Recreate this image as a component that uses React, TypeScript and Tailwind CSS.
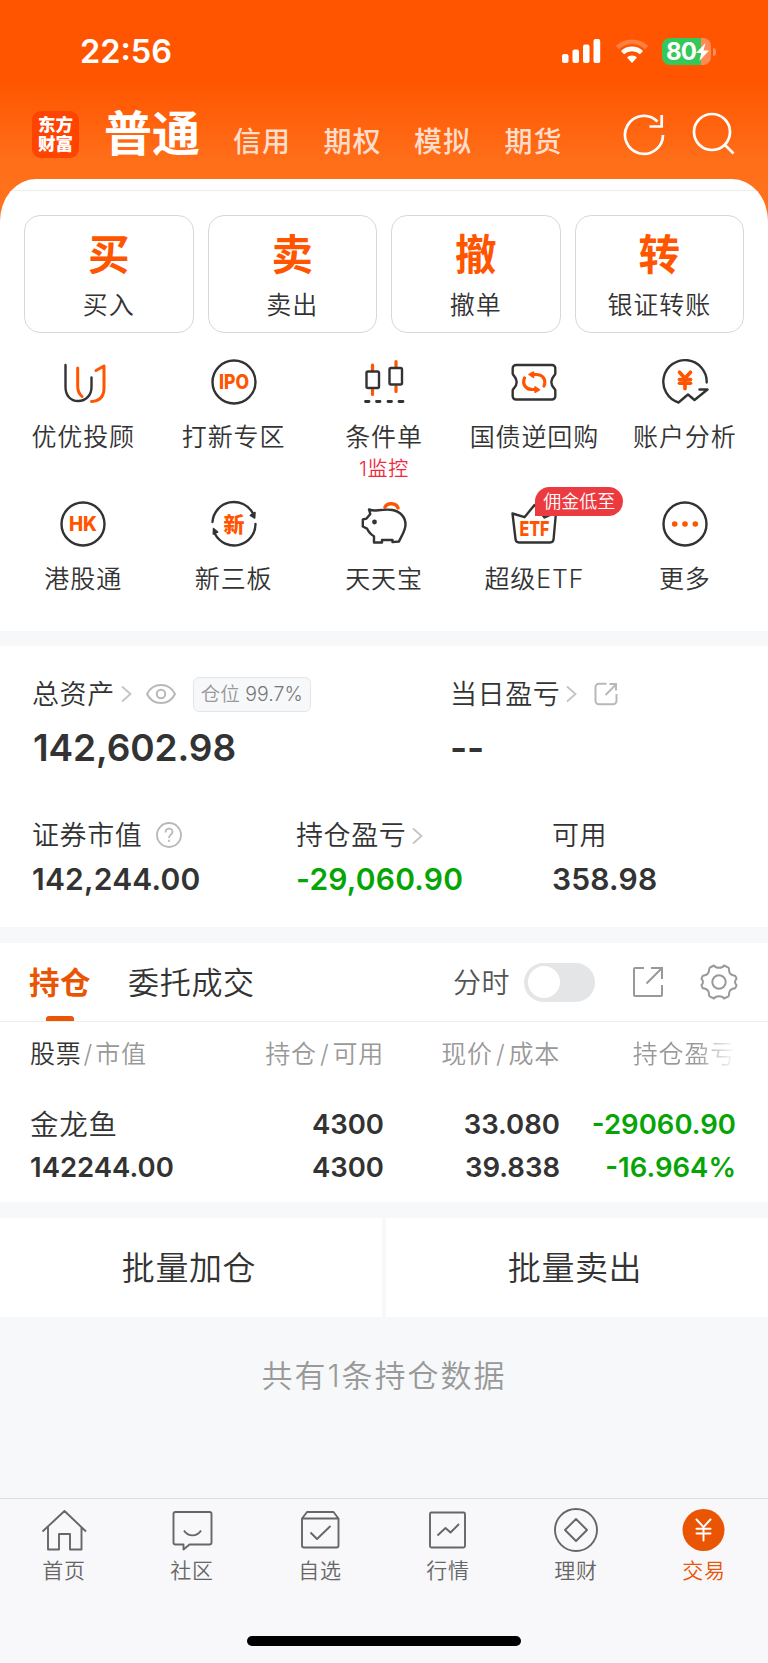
import type { ReactNode } from "react"
import { JapaneseYen } from "lucide-react"

const DARK = "#333333"
const ORANGE = "#ff5500"

const headerTabs = ["信用", "期权", "模拟", "期货"]

const actions = [
    { id: 1, mark: "买", name: "买入" },
    { id: 2, mark: "卖", name: "卖出" },
    { id: 3, mark: "撤", name: "撤单" },
    { id: 4, mark: "转", name: "银证转账" },
]

const Svg = ({ children, size = 48 }: { children: ReactNode; size?: number }) => (
    <svg width={size} height={size} viewBox={`0 0 ${size} ${size}`} fill="none" stroke={DARK} strokeWidth="2.4" strokeLinecap="round" strokeLinejoin="round">
        {children}
    </svg>
)

const AdvisorIcon = () => (
    <Svg>
        <path d="M6.500 7v22c0 8.500 5 14 12.700 14s13.300-5.500 13.300-14v-9.500" />
        <g stroke={ORANGE} strokeWidth="3">
            <path d="M18.700 10v18.500c0 4.500 1.500 7.500 4.300 10" />
            <path d="M37 12.500l8-4.500v22c0 8-4 13-12.500 13.500" />
        </g>
    </Svg>
)

const IpoIcon = () => (
    <Svg>
        <circle cx="24" cy="24" r="21.500" />
        <text x="24" y="31" fontSize="20" fontWeight="800" textAnchor="middle" textLength="30" lengthAdjust="spacingAndGlyphs" fill={ORANGE} stroke="none">IPO</text>
    </Svg>
)

const ConditionIcon = () => (
    <Svg>
        <g stroke={ORANGE} strokeWidth="3.200">
            <path d="M12.500 7v6M12.500 32v4.500M36 3.500v6M36 28.500v5" />
        </g>
        <rect x="6.500" y="13.500" width="12.500" height="16.500" rx="1.500" />
        <rect x="29.500" y="10" width="12.500" height="16.500" rx="1.500" />
        <path d="M5.500 43.500h3.500M16.500 43.500h3.500M28 43.500h3.500M39 43.500h4" strokeWidth="2.800" />
    </Svg>
)

const BondIcon = () => (
    <Svg>
        <path d="M6 7h36a3.300 3.300 0 0 1 3.300 3.300v5.400c0 1.500-4 3.500-4 8.300s4 6.800 4 8.300v5.900a3.300 3.300 0 0 1-3.300 3.300H6a3.300 3.300 0 0 1-3.300-3.300v-5.900c0-1.500 4-3.500 4-8.300s-4-6.800-4-8.300v-5.400A3.300 3.300 0 0 1 6 7z" />
        <g stroke={ORANGE} strokeWidth="3.200">
            <path d="M14.500 20c-2.500 6 1 11.500 8 11.500h3.500M34 28c2.500-6-1-11.500-8-11.500h-3.500" />
            <path d="M23.500 14v5.500l-4.500-3zM25 28.800v5.500l4.500-2.500z" fill={ORANGE} strokeWidth="1.500" />
        </g>
    </Svg>
)

const AnalysisIcon = () => (
    <Svg>
        <path d="M45.700 24.500A21.700 21.700 0 1 0 17.500 44.500l9.500-8 6.500 5.500L46.500 31.500h-8" />
        <JapaneseYen x={13} y={11.500} width={22} height={22} color={ORANGE} strokeWidth={4} />
    </Svg>
)

const HkIcon = () => (
    <Svg>
        <circle cx="24" cy="24" r="21.500" />
        <text x="24" y="31" fontSize="20" fontWeight="800" textAnchor="middle" textLength="28" lengthAdjust="spacingAndGlyphs" fill={ORANGE} stroke="none">HK</text>
    </Svg>
)

const NewBoardIcon = () => (
    <Svg>
        <path d="M2.500 22A21.500 21.500 0 0 1 43 13.500M45.500 24A21.500 21.500 0 0 1 5 34" />
        <path d="M45 12.500l-.3 5.500-4.400-2.700zM3.500 28.500l-.2 5.500 4.400-2z" fill={DARK} strokeWidth="1.500" />
        <text x="24" y="31.500" fontSize="21" fontWeight="900" textAnchor="middle" fill={ORANGE} stroke="none">新</text>
    </Svg>
)

const PiggyIcon = () => (
    <Svg>
        <path d="M25 7c2.500-4.500 11-4.500 13 1" stroke={ORANGE} strokeWidth="3.400" />
        <path d="M9 9.500c2.500.9 5.500 1.200 9 .8 5-.6 10.500-1 14.500-.3 8 1.300 13 7.500 13 14.500 0 6-3.500 10.500-6.500 17l-6.500.6V40H22v2.500h-8v-6.200c-4-2-5.600-4.700-7-7.700L2.800 26.500v-7l3.500-.8 4-4.700z" />
        <circle cx="14.500" cy="22" r="2.400" fill={DARK} stroke="none" />
    </Svg>
)

const EtfIcon = () => (
    <Svg>
        <path d="M2.500 13.500l12 3.700L24.500 5l10 12.500 11.500-5-2.400 26.500c-.2 2.500-1 3.500-3.500 3.500H9c-2.500 0-3.300-1-3.500-3.500z" />
        <text x="24.500" y="35.500" fontSize="20.500" fontWeight="800" textAnchor="middle" textLength="30" lengthAdjust="spacingAndGlyphs" fill={ORANGE} stroke="none">ETF</text>
    </Svg>
)

const MoreIcon = () => (
    <Svg>
        <circle cx="24" cy="24" r="21.500" />
        <g fill={ORANGE} stroke="none">
            <circle cx="13.700" cy="24" r="2.800" />
            <circle cx="24" cy="24" r="2.800" />
            <circle cx="34.300" cy="24" r="2.800" />
        </g>
    </Svg>
)

const services = [
    { id: 1, name: "优优投顾", icon: <AdvisorIcon /> },
    { id: 2, name: "打新专区", icon: <IpoIcon /> },
    { id: 3, name: "条件单", icon: <ConditionIcon />, note: "1监控" },
    { id: 4, name: "国债逆回购", icon: <BondIcon /> },
    { id: 5, name: "账户分析", icon: <AnalysisIcon /> },
    { id: 6, name: "港股通", icon: <HkIcon /> },
    { id: 7, name: "新三板", icon: <NewBoardIcon /> },
    { id: 8, name: "天天宝", icon: <PiggyIcon /> },
    { id: 9, name: "超级ETF", icon: <EtfIcon />, badge: "佣金低至" },
    { id: 10, name: "更多", icon: <MoreIcon /> },
]

const navItems = [
    {
        name: "首页",
        icon: <path d="M2.500 24.500L24.500 4l21.500 20.500M8 20v22.500h11V27h11v15.500h11.500V20" />,
    },
    {
        name: "社区",
        icon: (
            <>
                <path d="M7.500 5h34a2 2 0 0 1 2 2v28.500a2 2 0 0 1-2 2H21.500l-6 5v-5h-8a2 2 0 0 1-2-2V7a2 2 0 0 1 2-2z" />
                <path d="M16 23.500c4 6.500 13 6.500 17 0" />
            </>
        ),
    },
    {
        name: "自选",
        icon: (
            <>
                <path d="M6 11.500L11 5h26.500l5 6.500V38.500a2 2 0 0 1-2 2H8a2 2 0 0 1-2-2zM6 11.500h36.500" />
                <path d="M14.500 25.500l6.500 6.500L34.500 19" />
            </>
        ),
    },
    {
        name: "行情",
        icon: (
            <>
                <rect x="6" y="5.500" width="35" height="35" rx="1.500" />
                <path d="M13.500 28.500l8-7.500 5 4.500 8.500-8.500" />
            </>
        ),
    },
    {
        name: "理财",
        icon: (
            <>
                <circle cx="24" cy="23" r="21" />
                <path d="M24 12l11 11-11 11-11-11z" />
            </>
        ),
    },
    {
        name: "交易",
        active: true,
        icon: (
            <>
                <circle cx="23.500" cy="23" r="21" fill="#ea5504" stroke="none" />
                <JapaneseYen x={9.500} y={9} width={28} height={28} color="#ffffff" strokeWidth={1.700} />
            </>
        ),
    },
]

const Chevron = () => (
    <svg width="12" height="18" viewBox="0 0 12 18" fill="none" stroke="#c4c4c4" strokeWidth="1.800">
        <path d="M1 1.500L9.500 9 1 16.500" />
    </svg>
)

const Header = () => (
    <header className="h-[240px] bg-[linear-gradient(180deg,#ff5500_0px,#ff5500_80px,#ff6e19_160px,#ff741f_240px)] text-white">
        <div className="flex h-[103px] items-center pl-20 pr-[52px]">
            <span className="text-[32.500px] leading-10 font-semibold">22:56</span>
            <div className="ml-auto flex items-center">
                <svg width="39" height="25" viewBox="0 0 39 25" fill="#fff">
                    <rect x="0" y="15" width="6.500" height="9" rx="2" />
                    <rect x="10.500" y="10.500" width="6.500" height="13.500" rx="2" />
                    <rect x="21" y="5.500" width="6.500" height="18.500" rx="2" />
                    <rect x="31.500" y="0" width="6.700" height="24" rx="2" />
                </svg>
                <svg className="ml-[14px]" width="34" height="25" viewBox="0 0 34 25" fill="none" stroke="#fff" strokeWidth="4.600">
                    <path d="M2.300 8.500a21.500 21.500 0 0 1 29.400 0" strokeOpacity=".25" />
                    <path d="M7.500 13.600a14 14 0 0 1 19 0" />
                    <path d="M17 16.500c2 0 3.800.8 5 1.900L17 24l-5-5.600c1.200-1.100 3-1.900 5-1.900z" fill="#fff" stroke="none" />
                </svg>
                <div className="ml-[13px] flex h-[27px] w-[49px] items-center rounded-lg bg-[linear-gradient(90deg,#34c759_0_80%,#ff8a55_80%)] pl-1">
                    <span className="text-[24px] leading-none font-bold tracking-[-0.800px]">80</span>
                    <svg width="13" height="18" viewBox="0 0 13 18" fill="#fff">
                        <path d="M9.500 0L0 10h5.300L3.300 18 13 7.500H7.500z" />
                    </svg>
                </div>
                <div className="ml-0.5 h-2 w-[3px] rounded-r-full bg-[#ff8a55]" />
            </div>
        </div>
        <div className="flex h-[62px] items-center pl-8">
            <div className="flex size-[47px] flex-col items-center justify-center rounded-[9px] bg-[#ff4300] text-[17.500px] leading-[19.500px] font-black">
                <span>东方</span>
                <span>财富</span>
            </div>
            <h1 className="ml-[25px] text-[48px] leading-[60px] font-bold">普通</h1>
            <nav className="ml-[33px] flex gap-[32.500px] pt-4 text-[28px] leading-9 font-medium tracking-[1px] text-[#ffddcc]">
                {headerTabs.map((item) => (
                    <span key={item}>{item}</span>
                ))}
            </nav>
            <svg className="ml-[59px]" width="44" height="44" viewBox="0 0 44 44" fill="none" stroke="#fff" strokeWidth="2.700">
                <path d="M41 23a19 19 0 1 1-5.500-13.500" />
                <path d="M39.700 3v11.500H27.500" />
            </svg>
            <svg className="ml-[26px]" width="44" height="44" viewBox="0 0 44 44" fill="none" stroke="#fff" strokeWidth="2.700">
                <circle cx="20" cy="20" r="18" />
                <path d="M32.500 32.500l9 9" />
            </svg>
        </div>
    </header>
)

const Services = () => (
    <section className="-mt-[61px] h-[452px] bg-white pt-[11px] [border-radius:36px_36px_0_0/42px_42px_0_0]">
        <div className="mx-3 h-px bg-[#ececec]" />
        <div className="mt-6 grid grid-cols-4 gap-[14px] px-6">
            {actions.map((item) => (
                <button key={item.id} className="flex h-[118px] flex-col items-center rounded-2xl border border-[#d8d8d8] pt-[14px]">
                    <span className="text-[41.500px] leading-[50px] font-bold text-[#ff5500]">{item.mark}</span>
                    <span className="mt-[9px] text-[25px] leading-8 tracking-[0.900px]">{item.name}</span>
                </button>
            ))}
        </div>
        <div className="mt-[25px] grid grid-cols-5 px-2">
            {services.map((item) => (
                <div key={item.id} className="relative flex h-[142px] flex-col items-center">
                    {item.icon}
                    <span className="mt-[15px] text-[25px] leading-8 tracking-[0.900px] whitespace-nowrap">{item.name}</span>
                    {item.note && <span className="text-[20px] leading-8 tracking-[0.700px] text-[#f0283c]">{item.note}</span>}
                    {item.badge && (
                        <span className="absolute -top-[13px] left-[76px] h-[29px] w-[88px] rounded-[15px] rounded-bl-none bg-[#eb3b40] text-center text-[18px] leading-[30px] text-white">
                            {item.badge}
                        </span>
                    )}
                </div>
            ))}
        </div>
    </section>
)

const Assets = () => (
    <section className="mt-[15px] h-[281px] bg-white pt-[30px] pl-8 text-[27px] tracking-[0.600px]">
        <div className="grid grid-cols-[418px_1fr]">
            <div className="flex h-9 items-center">
                <span className="pt-0.5">总资产</span>
                <span className="ml-1.5"><Chevron /></span>
                <svg className="ml-3" width="32" height="24" viewBox="0 0 32 24" fill="none" stroke="#b8b8b8" strokeWidth="2">
                    <path d="M2 12C5 6 10 3 16 3s11 3 14 9c-3 6-8 9-14 9S5 18 2 12z" />
                    <circle cx="16" cy="12" r="4.200" />
                </svg>
                <span className="ml-4 flex h-[35px] w-[118px] items-center justify-center rounded-md border border-[#e4e5e8] bg-[#f7f8fa] pt-0.5 text-[19.500px] tracking-normal whitespace-nowrap text-[#999999]">
                    仓位&nbsp;<span className="text-[#777777]">99.7%</span>
                </span>
            </div>
            <div className="flex h-9 items-center">
                <span className="pt-0.5">当日盈亏</span>
                <span className="ml-1.5"><Chevron /></span>
                <svg className="ml-4" width="24" height="24" viewBox="0 0 24 24" fill="none" stroke="#b8b8b8" strokeWidth="2">
                    <path d="M12.500 1.800H5a3.500 3.500 0 0 0-3.500 3.500v13.500a3.500 3.500 0 0 0 3.500 3.500h14a3.500 3.500 0 0 0 3.500-3.500V12M11.500 13L22 2.500M15.500 2H22v6.500" />
                </svg>
            </div>
        </div>
        <div className="mt-4 grid h-10 grid-cols-[418px_1fr] items-center text-[37px] leading-10 font-semibold tracking-[-0.100px]">
            <span className="pl-px">142,602.98</span>
            <span>--</span>
        </div>
        <div className="mt-[48px] grid h-9 grid-cols-[264px_256px_1fr] items-center">
            <div className="flex items-center">
                <span>证券市值</span>
                <svg className="ml-[13px]" width="28" height="28" viewBox="0 0 28 28" fill="none" stroke="#b8b8b8" strokeWidth="1.800">
                    <circle cx="14" cy="13" r="12" />
                    <path d="M10.500 10.500c0-5 7-5 7-.8 0 3-3.500 2.800-3.500 6.300M14 17.800v2" />
                </svg>
            </div>
            <div className="flex items-center">
                <span>持仓盈亏</span>
                <span className="ml-1.5"><Chevron /></span>
            </div>
            <span>可用</span>
        </div>
        <div className="mt-[10px] grid h-[34px] grid-cols-[264px_256px_1fr] items-center text-[30px] leading-[34px] font-semibold tracking-[0.200px]">
            <span>142,244.00</span>
            <span className="text-[#06a506]">-29,060.90</span>
            <span>358.98</span>
        </div>
    </section>
)

const Holdings = () => (
    <section className="mt-4 h-[259px] bg-white">
        <div className="flex h-[79px] items-center border-b border-[#eeeeee] pl-[29px] text-[31px]">
            <div className="flex h-[78px] flex-col items-center">
                <span className="mt-[19px] h-[54px] text-[30.500px] leading-[42px] font-bold tracking-[0.500px] text-[#ea5504]">持仓</span>
                <span className="h-[5px] w-7 rounded-t-[3px] bg-[#ea5504]" />
            </div>
            <span className="ml-[37px] pt-0.5 leading-[42px] tracking-[0.700px]">委托成交</span>
            <span className="ml-auto pt-0.5 text-[28px] tracking-[0.500px] text-[#555555]">分时</span>
            <div className="ml-[14px] flex h-[39px] w-[71px] items-center rounded-full bg-[#e4e5e7] pl-1">
                <div className="size-8 rounded-full bg-white" />
            </div>
            <svg className="ml-[37px]" width="32" height="32" viewBox="0 0 32 32" fill="none" stroke="#999999" strokeWidth="2">
                <path d="M12 2H3a1 1 0 0 0-1 1v26a1 1 0 0 0 1 1h26a1 1 0 0 0 1-1V19M14.500 17.500L29.500 2.500M19 2h11v11" />
            </svg>
            <svg className="mr-[30px] ml-[36px]" width="38" height="38" viewBox="0 0 38 38" fill="none" stroke="#999999" strokeWidth="2" strokeLinejoin="round">
                <path d="M10 4.500L14 2.500C15.500 5.500 22.500 5.500 24 2.500L28.500 4.700C29.500 5.500 28.500 8 29.800 10C31 12 33 12.500 35 12.700C36 14 36.500 15 36.500 16C34.500 17.500 34.500 20.500 36.500 22C36.500 23 36 24 35 25.300C33 25.500 31 26 29.800 28C28.500 30 29.500 32.500 28.500 33.300L24 35.500C22.500 32.500 15.500 32.500 14 35.500L9.500 33.300C8.500 32.500 9.500 30 8.200 28C7 26 5 25.500 3 25.300C2 24 1.500 23 1.500 22C3.500 20.500 3.500 17.500 1.500 16C1.500 15 2 14 3 12.700C5 12.500 7 12 8.200 10C9.500 8 8.500 5.500 10 4.500z" />
                <circle cx="19" cy="19" r="6.700" />
            </svg>
        </div>
        <div className="grid grid-cols-[178px_176px_176px_176px] pl-[30px] text-right text-[25px] leading-[64px] tracking-[0.800px] text-[#999999]">
            <span className="text-left">
                <span className="text-[#333333]">股票</span><span className="px-0.5">/</span>市值
            </span>
            <span>持仓<span className="px-[3px]">/</span>可用</span>
            <span>现价<span className="px-[3px]">/</span>成本</span>
            <span className="bg-[linear-gradient(90deg,#999999_78%,#ffffff_100%)] bg-clip-text text-transparent">持仓盈亏</span>
        </div>
        <div className="mt-[17px] grid grid-cols-[178px_176px_176px_176px] pl-[30px] text-right text-[27.500px] leading-[43px] font-semibold">
            <span className="text-left text-[28.500px] font-[350] tracking-[0.700px]">金龙鱼</span>
            <span>4300</span>
            <span>33.080</span>
            <span className="text-[#06a506]">-29060.90</span>
            <span className="text-left">142244.00</span>
            <span>4300</span>
            <span>39.838</span>
            <span className="text-[#06a506]">-16.964%</span>
        </div>
    </section>
)

const BottomNav = () => (
    <footer className="flex h-[165px] flex-col items-center border-t border-[#dddddf] bg-[#f8f8fb]">
        <div className="grid w-full grid-cols-6 pt-2">
            {navItems.map((item) => (
                <div key={item.name} className={`flex flex-col items-center ${item.active ? "text-[#ea5504]" : "text-[#666666]"}`}>
                    <svg width="48" height="48" viewBox="0 0 48 48" fill="none" stroke="currentColor" strokeWidth="1.900" strokeLinejoin="round">
                        {item.icon}
                    </svg>
                    <span className="mt-0.5 text-[21px] leading-7 tracking-[0.700px]">{item.name}</span>
                </div>
            ))}
        </div>
        <div className="mt-[51px] h-2.5 w-[274px] rounded-full bg-black" />
    </footer>
)

export default function App() {
    return (
        <div className="h-[1663px] w-[768px] overflow-hidden bg-[#f6f8fa] font-['Inter','Noto_Sans_CJK_SC',sans-serif] font-[350] text-[#333333]">
            <Header />
            <Services />
            <Assets />
            <Holdings />
            <div className="mt-4 grid h-[99px] grid-cols-2 gap-1 text-[33px] tracking-[0.600px]">
                <button className="bg-white pt-[3px] pr-1">批量加仓</button>
                <button className="bg-white pt-[3px] pr-1">批量卖出</button>
            </div>
            <p className="h-[181px] pt-[39px] text-center text-[31px] leading-10 tracking-[2px] text-[#999999]">共有1条持仓数据</p>
            <BottomNav />
        </div>
    )
}
